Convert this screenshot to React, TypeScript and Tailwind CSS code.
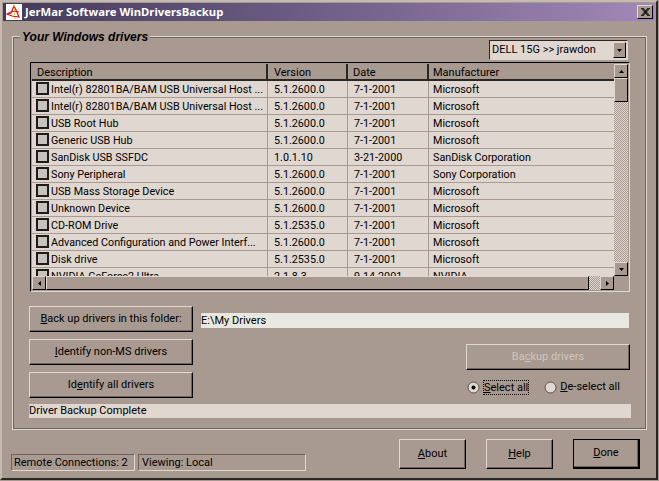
import React from 'react';

const rows = [
  ['Intel(r) 82801BA/BAM USB Universal Host ...', '5.1.2600.0', '7-1-2001', 'Microsoft'],
  ['Intel(r) 82801BA/BAM USB Universal Host ...', '5.1.2600.0', '7-1-2001', 'Microsoft'],
  ['USB Root Hub', '5.1.2600.0', '7-1-2001', 'Microsoft'],
  ['Generic USB Hub', '5.1.2600.0', '7-1-2001', 'Microsoft'],
  ['SanDisk USB SSFDC', '1.0.1.10', '3-21-2000', 'SanDisk Corporation'],
  ['Sony Peripheral', '5.1.2600.0', '7-1-2001', 'Sony Corporation'],
  ['USB Mass Storage Device', '5.1.2600.0', '7-1-2001', 'Microsoft'],
  ['Unknown Device', '5.1.2600.0', '7-1-2001', 'Microsoft'],
  ['CD-ROM Drive', '5.1.2535.0', '7-1-2001', 'Microsoft'],
  ['Advanced Configuration and Power Interf...', '5.1.2600.0', '7-1-2001', 'Microsoft'],
  ['Disk drive', '5.1.2535.0', '7-1-2001', 'Microsoft'],
  ['NVIDIA GeForce2 Ultra', '2.1.8.3', '9-14-2001', 'NVIDIA'],
];

const raised = 'border border-t-[#e0d8d0] border-l-[#e0d8d0] border-r-black border-b-black';
const dither = 'bg-[repeating-conic-gradient(#e0d8d0_0_25%,#a89a90_0_50%)] bg-[length:2px_2px]';

const Arrow = ({ d }: { d: string }) => (
  <svg width="7" height="7" viewBox="0 0 7 7"><path d={d} fill="#000" /></svg>
);

const ScrollBtn = ({ d, className = '' }: { d: string; className?: string }) => (
  <div className={`w-[14px] h-[14px] flex items-center justify-center shrink-0 bg-[#a89a90] ${raised} ${className}`}>
    <Arrow d={d} />
  </div>
);

const Btn = ({ children, className = '' }: { children: React.ReactNode; className?: string }) => (
  <button className={`bg-[#a89a90] text-[11px] text-black border border-t-[#e0d8d0] border-l-[#e0d8d0] border-r-black border-b-black shadow-[inset_-1px_-1px_0_#6e645e] ${className}`}>
    {children}
  </button>
);

const Radio = ({ on }: { on?: boolean }) => (
  <svg width="13" height="13" viewBox="0 0 13 13" className="shrink-0">
    <circle cx="6.5" cy="6.5" r="5.5" fill="#dfd7d0" stroke="#544c48" />
    {on && <circle cx="6.5" cy="6.5" r="2" fill="#000" />}
  </svg>
);

const AppIcon = () => (
  <svg width="16" height="16" viewBox="0 0 16 16" className="shrink-0 bg-white">
    <path d="M8 2L5 9l-4 1 5 2 7 1-3-7z" fill="none" stroke="#d81010" strokeWidth="1.2" />
    <path d="M1 10c4-3 8-3 12-2" fill="none" stroke="#e01010" strokeWidth="1" />
    <path d="M8 1l1 14" stroke="#e8c000" strokeWidth="1" strokeDasharray="2 2" />
  </svg>
);

const Row = ({ cells }: { cells: string[] }) => (
  <div className="flex h-[17px] shrink-0 bg-[#dfd7d0] border-b border-[#a89a90] text-[10.75px] leading-[18px]">
    <div className="w-[236px] shrink-0 flex pl-[4px] border-r border-[#a89a90] overflow-hidden">
      <span className="w-[13px] h-[13px] mt-[1px] shrink-0 bg-[#c8c2bc] border-2 border-[#1e1c1a] mr-[2px]" />
      <span className="whitespace-nowrap">{cells[0]}</span>
    </div>
    <div className="w-[80px] shrink-0 pl-[6px] border-r border-[#a89a90]">{cells[1]}</div>
    <div className="w-[81px] shrink-0 pl-[6px] border-r border-[#a89a90]">{cells[2]}</div>
    <div className="flex-1 pl-[4px]">{cells[3]}</div>
  </div>
);

export default function App() {
  return (
    <div className="w-[659px] h-[481px] bg-[#a89a90]">
      <div
        className="w-[658px] h-[480px] bg-[#a89a90] text-black text-[11px] border-2 border-t-[#c4bab2] border-l-[#c4bab2] border-r-[#2a2624] border-b-[#2a2624] px-[1px] pt-[1px] flex flex-col overflow-hidden"
        style={{ fontFamily: 'Roboto, Tahoma, sans-serif' }}
      >
        {/* Title bar */}
        <div className="h-[18px] shrink-0 flex items-center pl-[3px] pr-[2px] bg-gradient-to-r from-[#433a5a] to-[#a288b8]">
          <AppIcon />
          <span className="ml-[3px] text-white font-bold text-[11.3px]" style={{ fontFamily: '"Noto Sans", sans-serif' }}>
            JerMar Software WinDriversBackup
          </span>
          <div className={`ml-auto w-[16px] h-[14px] flex items-center justify-center bg-[#a89a90] ${raised}`}>
            <svg width="9" height="8" viewBox="0 0 9 8"><path d="M1 0l7 8M0 0l7 8M2 0l7 8M8 0L1 8M7 0L0 8M9 0L2 8" stroke="#000" strokeWidth="0.8" /></svg>
          </div>
        </div>

        {/* Driver group */}
        <div className="relative mt-[15px] ml-[9px] mr-[8px] h-[394px] shrink-0 border border-[#e0d8d0] outline outline-1 outline-offset-[-2px] outline-[#6e645e]">
          <span className="absolute left-[7px] top-[-8px] px-[2px] bg-[#a89a90] font-bold italic text-[12px] leading-[16px]" style={{ fontFamily: '"Liberation Sans", sans-serif' }}>
            Your Windows drivers
          </span>

          <div className="flex justify-end pr-[18px] pt-[3px] h-[25px]">
            <div className="w-[139px] h-[20px] flex items-center bg-[#dfd7d0] border border-t-[#2a2624] border-l-[#2a2624] border-r-[#e0d8d0] border-b-[#e0d8d0]">
              <span className="flex-1 pl-[2px]">DELL 15G &gt;&gt; jrawdon</span>
              <ScrollBtn d="M1 2h5L3.5 5z" className="!h-[16px] !w-[13px] mr-[1px]" />
            </div>
          </div>

          {/* List */}
          <div className="ml-[17px] mr-[16px] h-[230px] flex flex-col border border-t-black border-l-black border-r-[#e0d8d0] border-b-[#e0d8d0] p-[1px] pr-0">
            <div className="flex flex-1 min-h-0">
              <div className="flex-1 flex flex-col overflow-hidden">
                <div className="flex h-[17px] shrink-0 leading-[18px] border-b-2 border-[#2a2624]">
                  <div className="w-[236px] shrink-0 pl-[5px] border-r-2 border-[#2a2624]">Description</div>
                  <div className="w-[80px] shrink-0 pl-[6px] border-r-2 border-[#2a2624]">Version</div>
                  <div className="w-[81px] shrink-0 pl-[5px] border-r-2 border-[#2a2624]">Date</div>
                  <div className="flex-1 pl-[4px]">Manufacturer</div>
                </div>
                {rows.map((r, i) => <Row key={i} cells={r} />)}
              </div>
              <div className="w-[14px] shrink-0 mr-[1px] flex flex-col">
                <ScrollBtn d="M3.5 2L1 5h5z" />
                <div className={`flex-1 flex flex-col ${dither}`}>
                  <div className={`h-[24px] bg-[#a89a90] ${raised}`} />
                </div>
                <ScrollBtn d="M1 2h5L3.5 5z" />
              </div>
            </div>
            <div className="flex h-[14px] shrink-0 mr-[15px]">
              <ScrollBtn d="M5 1v5L2 3.5z" />
              <div className={`flex-1 bg-[#a89a90] ${raised}`} />
              <div className={`w-[11px] ${dither}`} />
              <ScrollBtn d="M2 1v5L5 3.5z" />
            </div>
          </div>

          {/* Controls */}
          <div className="flex pl-[16px] pr-[16px] pt-[14px]">
            <div className="flex flex-col gap-[7px] w-[164px] shrink-0">
              <Btn className="h-[26px]"><u>B</u>ack up drivers in this folder:</Btn>
              <Btn className="h-[26px]"><u>I</u>dentify non-MS drivers</Btn>
              <Btn className="h-[26px]">Id<u>e</u>ntify all drivers</Btn>
            </div>
            <div className="flex-1 ml-[8px] flex flex-col items-end">
              <div className="self-start w-[428px] h-[15px] mt-[7px] bg-[#e8e8e0] leading-[15px]">E:\My Drivers</div>
              <Btn className="w-[164px] h-[26px] mt-[16px] !text-[#cfc6be]">Ba<u>c</u>kup drivers</Btn>
              <div className="flex items-center w-[164px] mt-[10px] h-[15px]">
                <span className="ml-[1px]"><Radio on /></span>
                <span className="ml-[3px] leading-[13px] border border-dotted border-black"><u>S</u>elect all</span>
                <span className="ml-[15px]"><Radio /></span>
                <span className="ml-[3px] whitespace-nowrap"><u>D</u>e-select all</span>
              </div>
            </div>
          </div>
          <div className="ml-[16px] mr-[15px] mt-[6px] h-[14px] bg-[#dfd7d0] leading-[14px]">Driver Backup Complete</div>
        </div>

        {/* Bottom row */}
        <div className="flex mt-[9px] ml-[8px] mr-[15px]">
          <div className="flex gap-[3px] mt-[15px]">
            <div className="w-[124px] h-[17px] pl-[2px] leading-[15px] whitespace-nowrap border border-[#e0d8d0] border-t-[#6e645e] border-l-[#6e645e]">Remote Connections: 2</div>
            <div className="w-[168px] h-[17px] pl-[3px] leading-[15px] whitespace-nowrap border border-[#e0d8d0] border-t-[#6e645e] border-l-[#6e645e]">Viewing: Local</div>
          </div>
          <div className="ml-auto flex gap-[20px]">
            <Btn className="w-[67px] h-[30px]"><u>A</u>bout</Btn>
            <Btn className="w-[67px] h-[30px]"><u>H</u>elp</Btn>
            <Btn className="w-[67px] h-[30px] !border-black !border-r-2 !border-b-2"><u>D</u>one</Btn>
          </div>
        </div>
      </div>
    </div>
  );
}
